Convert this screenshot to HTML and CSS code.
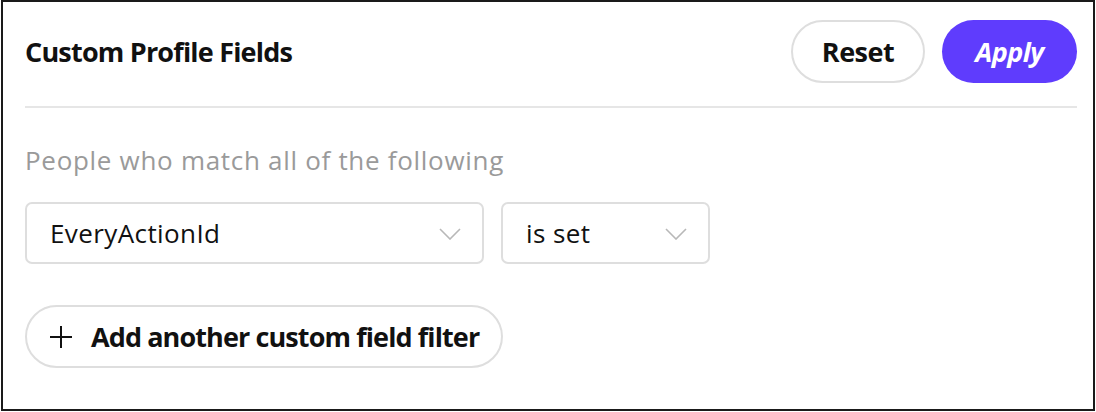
FILE: index.html
```html
<!DOCTYPE html>
<html>
<head>
<meta charset="utf-8">
<link rel="stylesheet" href="styles.css">
</head>
<body>
<div class="panel">
  <div class="header">
    <h1 class="title">Custom Profile Fields</h1>
    <div class="actions">
      <button class="btn btn-reset">Reset</button>
      <button class="btn btn-apply">Apply</button>
    </div>
  </div>
  <div class="divider"></div>
  <p class="subtitle">People who match all of the following</p>
  <div class="filter-row">
    <div class="select select-field">
      <span>EveryActionId</span>
      <svg class="chev" width="22" height="12" viewBox="0 0 22 12"><path d="M1 1 L11 11 L21 1" fill="none" stroke="#b8b8b8" stroke-width="1.6"/></svg>
    </div>
    <div class="select select-op">
      <span>is set</span>
      <svg class="chev" width="22" height="12" viewBox="0 0 22 12"><path d="M1 1 L11 11 L21 1" fill="none" stroke="#b8b8b8" stroke-width="1.6"/></svg>
    </div>
  </div>
  <button class="btn btn-add">
    <svg class="plus" width="24" height="24" viewBox="0 0 24 24"><path d="M12 1 V23 M1 12 H23" stroke="#111" stroke-width="2" fill="none"/></svg>
    <span class="add-label">Add another custom field filter</span>
  </button>
</div>
</body>
</html>
```

FILE: styles.css
```css
* { box-sizing: border-box; }
html, body { margin: 0; padding: 0; background: #fff; }
body { font-family: "Open Sans", "Noto Sans", sans-serif; color: #111; }
.panel {
  width: 1094px;
  height: 411px;
  margin-left: 1px;
  border: 2px solid #1a1a1a;
  padding: 18px 16px 0 22px;
}
.header {
  display: flex;
  align-items: center;
  justify-content: space-between;
  height: 63px;
}
.title {
  margin: 0;
  font-size: 27px;
  font-weight: 700;
  letter-spacing: -0.8px;
}
.actions { display: flex; gap: 17px; }
.btn {
  font-family: inherit;
  height: 63px;
  border-radius: 32px;
  font-size: 27px;
  font-weight: 700;
  letter-spacing: -0.5px;
  cursor: pointer;
  padding: 0;
  white-space: nowrap;
}
.btn-reset {
  width: 134px;
  background: #fff;
  border: 2px solid #dedede;
  color: #111;
}
.btn-apply {
  width: 135px;
  background: #5f3cfd;
  border: none;
  color: #fff;
  font-style: italic;
}
.divider {
  height: 2px;
  background: #e6e6e6;
  margin: 23px 0 0 0;
}
.subtitle {
  margin: 37px 0 0 0;
  font-size: 26px;
  line-height: 30px;
  letter-spacing: 0.7px;
  color: #9a9a9a;
}
.filter-row {
  display: flex;
  gap: 17px;
  margin-top: 27px;
}
.select {
  height: 62px;
  border: 2px solid #dedede;
  border-radius: 7px;
  display: flex;
  align-items: center;
  justify-content: space-between;
  padding: 0 21px 0 23px;
  font-size: 26px;
  letter-spacing: 0.4px;
}
.select-field { width: 459px; }
.select-op { width: 209px; }
.chev { margin-top: 1px; }
.btn-add {
  margin-top: 41px;
  width: 478px;
  background: #fff;
  border: 2px solid #dedede;
  color: #111;
  display: flex;
  align-items: center;
  gap: 18px;
  padding: 0 0 0 22px;
  letter-spacing: -0.9px;
}
.plus { flex-shrink: 0; }
.add-label { flex-shrink: 0; }
```
